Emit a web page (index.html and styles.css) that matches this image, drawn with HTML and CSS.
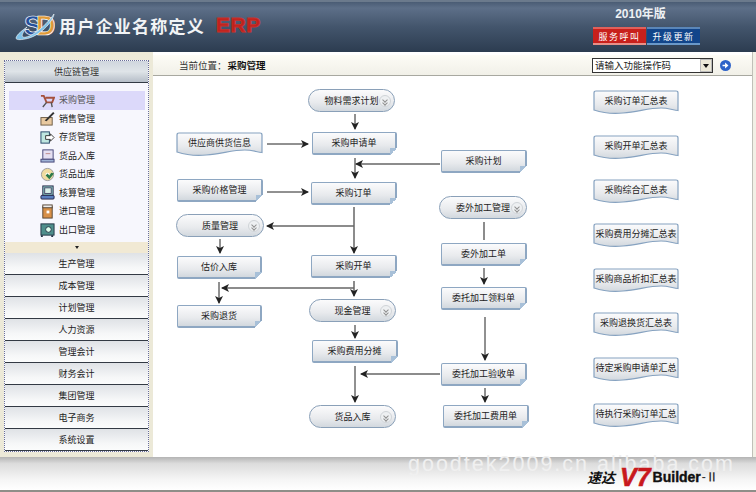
FILE: index.html
```html
<!DOCTYPE html>
<html lang="zh">
<head>
<meta charset="utf-8">
<title>采购管理</title>
<link rel="stylesheet" href="styles.css">
</head>
<body>
<svg class="defs" width="0" height="0">
  <defs>
    <linearGradient id="waveFill" x1="0" y1="0" x2="0" y2="1"><stop offset="0" stop-color="#fbfbfc"/><stop offset=".6" stop-color="#e8eaed"/><stop offset="1" stop-color="#d2d8de"/></linearGradient>
    <symbol id="wave" viewBox="0 0 86 24" preserveAspectRatio="none">
      <path d="M1 20C10 23 20 24 30 23 45 22 55 18 68 18 75 18 80 20 85 20.500V3Q85 1 83 1H3Q1 1 1 3Z" fill="url(#waveFill)" stroke="#86a2c0" stroke-width="1.200"/>
    </symbol>
  </defs>
</svg>
<div class="app">
  <header class="top">
    <div class="brand">
      <svg class="logo" width="40" height="32" viewBox="0 0 40 32">
        <text x="9" y="26" class="logo-s">S</text><text x="21" y="26" class="logo-d">D</text>
        <path d="M1 29C2 25 8 21 12 18 8 23 6 27 8 28 14 30 30 18 39 5 38 13 24 28 10 30 5 31 1 31 1 29Z" fill="#7fc2e8" stroke="#fff" stroke-width=".6"/>
      </svg>
      <span class="brand-name">用户企业名称定义</span>
      <span class="brand-erp">ERP</span>
    </div>
    <div class="edition">
      <div class="edition-year">2010年版</div>
      <div class="edition-buttons"><span class="top-btn top-btn-red">服务呼叫</span><span class="top-btn top-btn-blue">升级更新</span></div>
    </div>
  </header>
  <div class="main">
    <aside class="side">
      <div class="side-frame">
        <div class="acc acc-open">供应链管理</div>
        <ul class="menu">
          <li class="menu-item menu-item-on"><svg class="ico" viewBox="0 0 16 16"><path d="M1 3h3l3 7h6l2-5H6" fill="none" stroke="#a5503c" stroke-width="2"/><path d="M7 10L3 15M12 10l1 5" stroke="#555" stroke-width="1.500"/></svg><span>采购管理</span></li>
          <li class="menu-item"><svg class="ico" viewBox="0 0 16 16"><rect x="1" y="7" width="12" height="8" fill="#e8c9a0" stroke="#6b5a44"/><path d="M5 10L14 1l1.500 1.500L7 11Z" fill="#333"/></svg><span>销售管理</span></li>
          <li class="menu-item"><svg class="ico" viewBox="0 0 16 16"><rect x="1" y="2" width="9" height="12" fill="#bfe6e0" stroke="#246"/><path d="M6 6h5V4l4 4-4 4v-2H6Z" fill="#fff" stroke="#333"/></svg><span>存货管理</span></li>
          <li class="menu-item"><svg class="ico" viewBox="0 0 16 16"><rect x="3" y="2" width="11" height="10" fill="#e5e0f2" stroke="#447"/><rect x="1" y="12" width="14" height="3" fill="#9fb3d6" stroke="#447"/><path d="M6 6h5" stroke="#b88"/></svg><span>货品入库</span></li>
          <li class="menu-item"><svg class="ico" viewBox="0 0 16 16"><circle cx="8" cy="8" r="6.500" fill="#f0dca0" stroke="#999"/><circle cx="8" cy="8" r="2" fill="#fff"/><path d="M6 9l4 4 5-6-3-1-2 3-2-2Z" fill="#2c7a4a"/></svg><span>货品出库</span></li>
          <li class="menu-item"><svg class="ico" viewBox="0 0 16 16"><rect x="3" y="1" width="11" height="10" fill="#8fd0c8" stroke="#224"/><rect x="5" y="3" width="7" height="6" fill="#d8f0e8" stroke="#446"/><rect x="1" y="11" width="14" height="4" rx="1" fill="#5a7fc0" stroke="#224"/></svg><span>核算管理</span></li>
          <li class="menu-item"><svg class="ico" viewBox="0 0 16 16"><rect x="3" y="3" width="10" height="12" fill="#d89048" stroke="#543"/><rect x="3" y="1" width="10" height="3" fill="#eee" stroke="#543"/><rect x="7" y="7" width="3" height="3" fill="#fff"/></svg><span>进口管理</span></li>
          <li class="menu-item"><svg class="ico" viewBox="0 0 16 16"><rect x="1" y="2" width="14" height="12" fill="#4f8f8c" stroke="#234"/><circle cx="9" cy="8" r="3" fill="#dfe" stroke="#234"/><path d="M2 14v2M13 14v2" stroke="#234" stroke-width="2"/></svg><span>出口管理</span></li>
        </ul>
        <div class="more"><i class="more-caret"></i></div>
        <div class="acc">生产管理</div>
        <div class="acc">成本管理</div>
        <div class="acc">计划管理</div>
        <div class="acc">人力资源</div>
        <div class="acc">管理会计</div>
        <div class="acc">财务会计</div>
        <div class="acc">集团管理</div>
        <div class="acc">电子商务</div>
        <div class="acc">系统设置</div>
      </div>
    </aside>
    <section class="content">
      <div class="crumb">
        <span class="crumb-label">当前位置：</span><b class="crumb-page">采购管理</b>
        <div class="picker">
          <div class="picker-box"><span>请输入功能操作码</span><i class="picker-btn"></i></div>
          <svg class="picker-go" width="11" height="11" viewBox="0 0 13 13"><circle cx="6.500" cy="6.500" r="6.500" fill="#2d62c8"/><path d="M3 5.500h3V3l4 3.500L6 10V7.500H3Z" fill="#fff"/></svg>
        </div>
      </div>
      <div class="canvas">
        <svg class="wires" width="756" height="492" viewBox="0 0 756 492">
          <defs>
            <marker id="head" markerWidth="8" markerHeight="8" refX="7" refY="4" orient="auto" markerUnits="userSpaceOnUse"><path d="M0 0L8 4 0 8 2 4Z" fill="#222"/></marker>
          </defs>
          <g class="wire">
            <path d="M355 114V129" marker-end="url(#head)"/>
            <path d="M267 144H308" marker-end="url(#head)"/>
            <path d="M355 158V178" marker-end="url(#head)"/>
            <path d="M267 192H308" marker-end="url(#head)"/>
            <path d="M220 239V253" marker-end="url(#head)"/>
            <path d="M219 282V303" marker-end="url(#head)"/>
            <path d="M355 325V338" marker-end="url(#head)"/>
            <path d="M355 366V402" marker-end="url(#head)"/>
            <path d="M484 268V284" marker-end="url(#head)"/>
            <path d="M485 317V360" marker-end="url(#head)"/>
            <path d="M485 388V402" marker-end="url(#head)"/>
          </g>
          <g class="wire wire-gray">
            <path d="M440 164H356" marker-end="url(#head)"/>
            <path d="M354 207V253" marker-end="url(#head)"/>
            <path d="M354 226H267" marker-end="url(#head)"/>
            <path d="M354 288H222" marker-end="url(#head)"/>
            <path d="M354 281V296" marker-end="url(#head)"/>
            <path d="M440 374H361" marker-end="url(#head)"/>
            <path d="M484 222V240"/>
          </g>
        </svg>

        <div class="node node-pill" style="left:308px;top:89px;width:87px"><span>物料需求计划</span><i class="chev"></i></div>
        <div class="node node-note" style="left:312px;top:132px;width:85px">采购申请单</div>
        <div class="node node-wave" style="left:176px;top:132px;width:87px"><svg class="wave"><use href="#wave"/></svg><span>供应商供货信息</span></div>
        <div class="node node-note" style="left:177px;top:179px;width:86px">采购价格管理</div>
        <div class="node node-note" style="left:311px;top:182px;width:86px">采购订单</div>
        <div class="node node-pill" style="left:176px;top:214px;width:88px"><span>质量管理</span><i class="chev"></i></div>
        <div class="node node-note" style="left:177px;top:256px;width:85px">估价入库</div>
        <div class="node node-note" style="left:311px;top:255px;width:86px">采购开单</div>
        <div class="node node-note" style="left:177px;top:305px;width:85px">采购退货</div>
        <div class="node node-pill" style="left:309px;top:299px;width:87px"><span>现金管理</span><i class="chev"></i></div>
        <div class="node node-note" style="left:312px;top:340px;width:86px">采购费用分摊</div>
        <div class="node node-pill" style="left:309px;top:405px;width:87px"><span>货品入库</span><i class="chev"></i></div>
        <div class="node node-note" style="left:441px;top:150px;width:86px">采购计划</div>
        <div class="node node-pill" style="left:439px;top:196px;width:88px"><span>委外加工管理</span><i class="chev"></i></div>
        <div class="node node-note" style="left:441px;top:243px;width:86px">委外加工单</div>
        <div class="node node-note" style="left:441px;top:287px;width:86px">委托加工领料单</div>
        <div class="node node-note" style="left:441px;top:363px;width:86px">委托加工验收单</div>
        <div class="node node-note" style="left:443px;top:405px;width:86px">委托加工费用单</div>
        <div class="node node-wave" style="left:593px;top:90px;width:86px"><svg class="wave"><use href="#wave"/></svg><span>采购订单汇总表</span></div>
        <div class="node node-wave" style="left:593px;top:135px;width:86px"><svg class="wave"><use href="#wave"/></svg><span>采购开单汇总表</span></div>
        <div class="node node-wave" style="left:593px;top:179px;width:86px"><svg class="wave"><use href="#wave"/></svg><span>采购综合汇总表</span></div>
        <div class="node node-wave" style="left:593px;top:223px;width:86px"><svg class="wave"><use href="#wave"/></svg><span>采购费用分摊汇总表</span></div>
        <div class="node node-wave" style="left:593px;top:268px;width:86px"><svg class="wave"><use href="#wave"/></svg><span>采购商品折扣汇总表</span></div>
        <div class="node node-wave" style="left:593px;top:312px;width:86px"><svg class="wave"><use href="#wave"/></svg><span>采购退换货汇总表</span></div>
        <div class="node node-wave" style="left:593px;top:357px;width:86px"><svg class="wave"><use href="#wave"/></svg><span>待定采购申请单汇总</span></div>
        <div class="node node-wave" style="left:593px;top:403px;width:86px"><svg class="wave"><use href="#wave"/></svg><span>待执行采购订单汇总</span></div>
      </div>
    </section>
  </div>
  <footer class="foot">
    <span class="mark">goodtek2009.cn alibaba.com</span>
    <div class="foot-brand"><i class="foot-cn">速达</i><b class="foot-v7">V7</b><b class="foot-b">Builder</b><b class="foot-ii">-&#8545;</b></div>
  </footer>
</div>
</body>
</html>
```
FILE: styles.css
```css
* { box-sizing: border-box; }
html, body { margin: 0; padding: 0; }
body { width: 756px; height: 492px; overflow: hidden; background: #f2f0e6; font-family: "Liberation Sans", "Noto Sans CJK SC", sans-serif; color: #222; }
.defs { position: absolute; }
.app { width: 756px; height: 492px; display: flex; flex-direction: column; }

.top { height: 52px; flex: none; display: flex; justify-content: space-between; background: linear-gradient(#4a5c74 0, #5d6f88 12%, #43556c 50%, #2c3c50 100%); border-top: 2px solid #6b7a8c; }
.brand { display: flex; align-items: center; padding: 0 0 4px 15px; }
.logo { margin-right: 4px; }
.logo-s, .logo-d { font: bold 27px "Liberation Sans", sans-serif; stroke: #fff; stroke-width: .7; }
.logo-s { fill: #24509c; }
.logo-d { fill: #e09a38; }
.brand-name { color: #f2f4f6; font: bold 17px "Noto Sans CJK SC", sans-serif; letter-spacing: 1.250px; }
.brand-erp { margin-left: 11px; color: #c0201c; font: 900 21px "Liberation Sans", sans-serif; -webkit-text-stroke: 1px #c8302a; letter-spacing: .5px; }
.edition { width: 163px; display: flex; flex-direction: column; align-items: flex-start; padding: 5px 0 0 0; }
.edition-year { width: 95px; text-align: center; color: #eef1f4; font: bold 12px "Liberation Sans", "Noto Sans CJK SC", sans-serif; line-height: 14px; }
.edition-buttons { display: flex; gap: 1px; margin-top: 6px; }
.top-btn { width: 53px; height: 18px; color: #fff; font: 9px/15px "Noto Sans CJK SC", sans-serif; letter-spacing: 1.500px; text-align: center; }
.top-btn-red { background: #c8201c; border-top: 2px solid #e0605a; border-bottom: 2px solid #e89088; }
.top-btn-blue { background: #12458a; border-top: 2px solid #5a86b8; border-bottom: 2px solid #6a98c8; }

.main { flex: 1; min-height: 0; display: flex; }
.side { width: 153px; flex: none; padding: 8px 0 0 4px; background: #ece9d8; }
.side-frame { width: 145px; border: 1px dotted #6a6f98; background: #f7f7fd; }
.acc { height: 22px; font: 9px/21px "Noto Sans CJK SC", sans-serif; text-align: center; color: #222; background: linear-gradient(#dfe2e6, #f6f7f8 70%, #fbfcfc); border-bottom: 1px solid #333a44; }
.acc-open { background: linear-gradient(#cfd6de, #dfe4e8 50%, #b6bec8); color: #333; }
.menu { list-style: none; margin: 0; padding: 8px 3px 0 4px; height: 159px; }
.menu-item { height: 18.500px; display: flex; align-items: center; gap: 4px; font: 9px/18px "Noto Sans CJK SC", sans-serif; color: #222; padding-left: 31px; }
.menu-item-on { background: #dcd9fa; color: #555; }
.ico { width: 15px; height: 15px; flex: none; }
.more { height: 11px; background: #f1e9d4; display: flex; align-items: center; justify-content: center; }
.more-caret { width: 0; height: 0; border: 2.500px solid transparent; border-top: 3px solid #222; border-bottom: 0; }

.content { flex: 1; min-width: 0; display: flex; flex-direction: column; background: #fff; border-right: 1px solid #c0c0b8; margin-right: 3px; }
.crumb { height: 21px; flex: none; display: flex; align-items: center; padding-left: 26px; background: linear-gradient(#fdfcf6, #f1f0e8); border-bottom: 1px solid #a8a8a0; font: 9.500px/16px "Noto Sans CJK SC", sans-serif; margin-top: 3px; }
.crumb-label { color: #333; }
.crumb-page { color: #111; margin-left: 1px; font-weight: 700; }
.picker { margin-left: auto; margin-right: 21px; display: flex; align-items: center; gap: 7px; }
.picker-box { width: 121px; height: 15px; border: 1px solid #333; background: #fff; display: flex; justify-content: space-between; font: 9.500px/13px "Noto Sans CJK SC", sans-serif; padding-left: 2px; }
.picker-btn { width: 12px; height: 13px; background: #ece9d8; border: 1px solid #bbb; position: relative; }
.picker-btn::after { content: ""; position: absolute; left: 2px; top: 4px; border: 3px solid transparent; border-top: 4px solid #111; border-bottom: 0; }

.canvas { position: relative; flex: 1; }
.wires { position: absolute; left: -153px; top: -76px; }
.wire path { fill: none; stroke: #222; stroke-width: 1; }
.wire-gray path { stroke: #666; stroke-width: 1.500; }

.node { position: absolute; height: 23px; margin-left: -153px; margin-top: -76px; display: flex; align-items: center; justify-content: center; font: 9px/16px "Noto Sans CJK SC", sans-serif; color: #222; white-space: nowrap; background: linear-gradient(#fbfbfc, #e8eaed 60%, #d2d8de); border: 1px solid #8ea7c2; }
.node-note { border-radius: 2px; border-right-width: 2px; border-bottom-width: 2px; }
.node-note::after { content: ""; position: absolute; right: -2px; bottom: -2px; width: 7px; height: 7px; background: linear-gradient(135deg, #a8c0d8 50%, #fff 50%); }
.node-pill { border-radius: 12px; border-color: #8aa0b8; }
.chev { position: absolute; right: 3px; top: 5px; width: 12px; height: 12px; border-radius: 50%; background: #eef0f2; border: 1px solid #d0d4d8; }
.chev::before { content: ""; position: absolute; left: 3px; top: 1.500px; width: 3px; height: 3px; border: solid #8f8f8f; border-width: 0 1px 1px 0; transform: rotate(45deg); }
.chev::after { content: ""; position: absolute; left: 3px; top: 4.500px; width: 3px; height: 3px; border: solid #8f8f8f; border-width: 0 1px 1px 0; transform: rotate(45deg); }
.node-wave { height: 24px; background: none; border: 0; padding-bottom: 3px; }
.node-wave span { position: relative; }
.wave { position: absolute; left: 0; top: 0; width: 100%; height: 100%; }

.foot { height: 35px; flex: none; position: relative; background: linear-gradient(#b4b4b4, #dcdcdc 20%, #f6f6f6 70%, #fff); border-bottom: 2px solid #8e8e88; }
.mark { position: absolute; left: 408px; top: 2px; color: #f0f0f0; font: 21.500px/11px "Liberation Sans", sans-serif; letter-spacing: 2px; white-space: nowrap; }
.foot-brand { position: absolute; left: 587px; top: 13px; height: 14px; display: flex; align-items: center; white-space: nowrap; }
.foot-cn { font: italic bold 14px/12px "Noto Sans CJK SC", sans-serif; color: #111; }
.foot-v7 { margin-left: 5px; font: italic 900 25px/14px "Liberation Sans", sans-serif; color: #c8181c; -webkit-text-stroke: .6px #c8181c; }
.foot-b { margin-left: 2px; font: 900 14px/12px "Liberation Sans", sans-serif; color: #111; -webkit-text-stroke: .4px #111; }
.foot-ii { margin-left: 1px; font: bold 12px/12px "Liberation Serif", serif; color: #333; }
```
